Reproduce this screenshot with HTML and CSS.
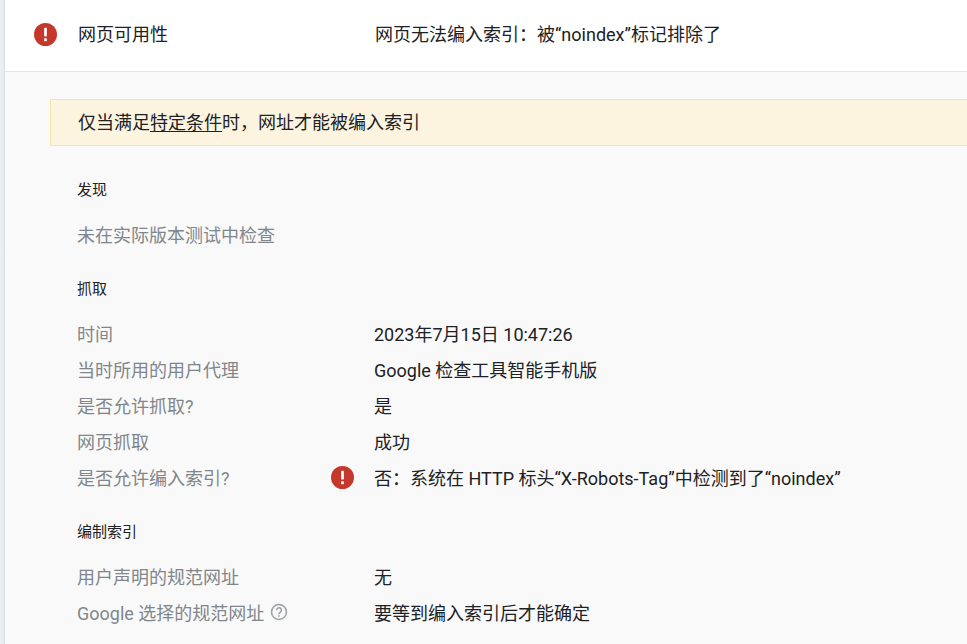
FILE: index.html
```html
<!DOCTYPE html>
<html lang="zh-CN">
<head>
<meta charset="utf-8">
<title>网页可用性</title>
<link rel="stylesheet" href="styles.css">
</head>
<body>
<main class="panel">
  <header class="head">
    <span class="status"><svg class="err" viewBox="0 0 24 24"><circle cx="12" cy="12" r="12"/><rect x="10.6" y="5" width="2.8" height="9" rx="0.5"/><rect x="10.6" y="16" width="2.8" height="3" rx="0.5"/></svg></span>
    <span class="head-label">网页可用性</span>
    <span class="head-value">网页无法编入索引：被“noindex”标记排除了</span>
  </header>
  <div class="body">
    <div class="notice">仅当满足<a class="link">特定条件</a>时，网址才能被编入索引</div>
    <h3 class="sec sec-first">发现</h3>
    <p class="plain">未在实际版本测试中检查</p>
    <h3 class="sec sec-crawl">抓取</h3>
    <div class="rows rows-crawl">
      <div class="row"><span class="k">时间</span><span class="v">2023年7月15日 10:47:26</span></div>
      <div class="row"><span class="k">当时所用的用户代理</span><span class="v">Google 检查工具智能手机版</span></div>
      <div class="row"><span class="k">是否允许抓取?</span><span class="v">是</span></div>
      <div class="row"><span class="k">网页抓取</span><span class="v">成功</span></div>
      <div class="row"><span class="k">是否允许编入索引?</span><span class="ic"><svg class="err" viewBox="0 0 24 24"><circle cx="12" cy="12" r="12"/><rect x="10.6" y="5" width="2.8" height="9" rx="0.5"/><rect x="10.6" y="16" width="2.8" height="3" rx="0.5"/></svg></span><span class="v">否：系统在 HTTP 标头“X-Robots-Tag”中检测到了“noindex”</span></div>
    </div>
    <h3 class="sec sec-index">编制索引</h3>
    <div class="rows rows-index">
      <div class="row"><span class="k">用户声明的规范网址</span><span class="v">无</span></div>
      <div class="row"><span class="k">Google 选择的规范网址<svg class="help" viewBox="0 0 24 24"><circle cx="12" cy="12" r="10" fill="none" stroke="#9aa0a6" stroke-width="2"/><path d="M8.8 9.6a3.2 3.2 0 1 1 5 2.6c-1.2.8-1.8 1.4-1.8 2.8" fill="none" stroke="#9aa0a6" stroke-width="2"/><rect x="11" y="16.3" width="2" height="2" fill="#9aa0a6"/></svg></span><span class="v">要等到编入索引后才能确定</span></div>
    </div>
  </div>
</main>
</body>
</html>
```

FILE: styles.css
```css
html, body {
  margin: 0;
  height: 100%;
  overflow: hidden;
}
body {
  font-family: Roboto, "Noto Sans CJK SC", sans-serif;
  font-size: 18px;
  color: #202124;
  height: 644px;
  background: linear-gradient(90deg, #eceef4 0, #e9ecf2 3px, #d9dde6 5px);
}
.panel {
  margin-left: 5px;
  height: 644px;
  background: #f9f9f9;
  overflow: hidden;
}
.head {
  height: 72px;
  box-sizing: border-box;
  background: #fff;
  display: flex;
  align-items: center;
  border-bottom: 1px solid #e4e4e4;
  padding-left: 29px;
  padding-bottom: 5px;
}
.status { width: 44px; display: flex; margin-top: 2px; }
.err { width: 23px; height: 23px; display: block; flex: none; }
.err circle { fill: #c5372a; }
.err rect { fill: #fff; }
.head-label { width: 297px; }
.body { padding: 27px 0 0 45px; }
.notice {
  height: 47px;
  box-sizing: border-box;
  background: #fdf4e0;
  border: 1px solid #f9e3a8;
  border-right: 0;
  padding-left: 27px;
  padding-bottom: 4px;
  display: flex;
  align-items: center;
  margin-right: -2px;
}
.link { text-decoration: underline; text-underline-offset: 2px; }
.sec {
  margin: 0;
  padding-left: 27px;
  font-size: 15px;
  font-weight: 400;
  line-height: 20px;
  color: #202124;
}
.sec-first { margin-top: 34px; }
.sec-crawl { margin-top: 31px; }
.sec-index { margin-top: 27px; }
.plain {
  margin: 24px 0 0;
  padding-left: 27px;
  line-height: 24px;
  color: #80868b;
}
.rows-crawl { margin-top: 16px; }
.rows-index { margin-top: 16px; }
.row {
  display: flex;
  align-items: center;
  height: 36px;
  padding-left: 27px;
}
.k {
  width: 297px;
  flex: none;
  color: #80868b;
  display: flex;
  align-items: center;
}
.v { color: #202124; }
.ic {
  margin-left: -43px;
  width: 43px;
  flex: none;
  display: block;
}
.help { width: 18px; height: 18px; margin-left: 6px; }
```
